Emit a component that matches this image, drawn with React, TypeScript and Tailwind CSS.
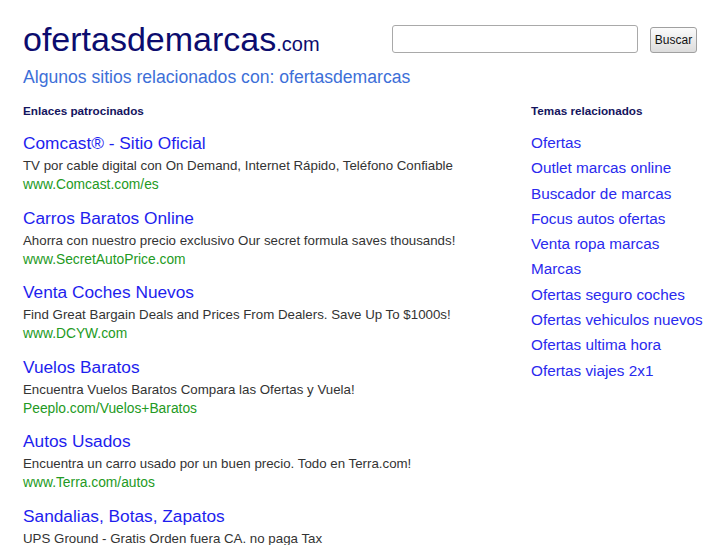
import React from "react";

const ads = [
  {
    title: "Comcast® - Sitio Oficial",
    desc: "TV por cable digital con On Demand, Internet Rápido, Teléfono Confiable",
    url: "www.Comcast.com/es",
  },
  {
    title: "Carros Baratos Online",
    desc: "Ahorra con nuestro precio exclusivo Our secret formula saves thousands!",
    url: "www.SecretAutoPrice.com",
  },
  {
    title: "Venta Coches Nuevos",
    desc: "Find Great Bargain Deals and Prices From Dealers. Save Up To $1000s!",
    url: "www.DCYW.com",
  },
  {
    title: "Vuelos Baratos",
    desc: "Encuentra Vuelos Baratos Compara las Ofertas y Vuela!",
    url: "Peeplo.com/Vuelos+Baratos",
  },
  {
    title: "Autos Usados",
    desc: "Encuentra un carro usado por un buen precio. Todo en Terra.com!",
    url: "www.Terra.com/autos",
  },
  {
    title: "Sandalias, Botas, Zapatos",
    desc: "UPS Ground - Gratis Orden fuera CA. no paga Tax",
    url: "",
  },
];

const topics = [
  "Ofertas",
  "Outlet marcas online",
  "Buscador de marcas",
  "Focus autos ofertas",
  "Venta ropa marcas",
  "Marcas",
  "Ofertas seguro coches",
  "Ofertas vehiculos nuevos",
  "Ofertas ultima hora",
  "Ofertas viajes 2x1",
];

export default function App() {
  return (
    <div className="h-[545px] overflow-hidden bg-white px-[23px] font-['Liberation_Sans',Arial,sans-serif]">
      {/* header */}
      <div className="flex items-start justify-between pt-[17px]">
        <a href="#" className="block leading-[44px] text-[#0c0c6e]">
          <span className="text-[34px]">ofertasdemarcas</span>
          <span className="text-[20px]">.com</span>
        </a>
        <form className="mr-[7px] mt-[8px] flex items-start gap-[12px]">
          <input
            type="text"
            className="h-[28px] w-[246px] rounded-[3px] border border-[#a9a9a9] bg-white"
          />
          <button
            type="button"
            className="mt-[2px] h-[26px] w-[47px] rounded-[3px] border border-[#a0a0a0] bg-gradient-to-b from-[#fbfbfb] to-[#dcdcdc] text-[12px] text-[#111]"
          >
            Buscar
          </button>
        </form>
      </div>
      <div className="mt-[-2px] whitespace-nowrap text-[17.6px] leading-[22px] text-[#3d6fd8]">
        Algunos sitios relacionados con: ofertasdemarcas
      </div>

      <div className="mt-[15px] flex">
        {/* sponsored links */}
        <div className="w-[508px]">
          <h3 className="text-[11.7px] font-bold leading-[16px] text-[#14145e]">
            Enlaces patrocinados
          </h3>
          <div className="mt-[13px]">
            {ads.map((ad) => (
              <div key={ad.title} className="h-[74.6px]">
                <a href="#" className="block text-[17.3px] leading-[22px] text-[#1e1eee]">
                  {ad.title}
                </a>
                <div className="mt-[1px] text-[13.3px] leading-[21px] text-[#333]">{ad.desc}</div>
                {ad.url && (
                  <a href="#" className="block text-[13.8px] leading-[18px] text-[#239a23]">
                    {ad.url}
                  </a>
                )}
              </div>
            ))}
          </div>
        </div>

        {/* related topics */}
        <div className="flex-1">
          <h3 className="text-[11.7px] font-bold leading-[16px] text-[#14145e]">
            Temas relacionados
          </h3>
          <ul className="mt-[11px]">
            {topics.map((t) => (
              <li key={t} className="text-[15.3px] leading-[25.3px]">
                <a href="#" className="text-[#2a2aee]">
                  {t}
                </a>
              </li>
            ))}
          </ul>
        </div>
      </div>
    </div>
  );
}
